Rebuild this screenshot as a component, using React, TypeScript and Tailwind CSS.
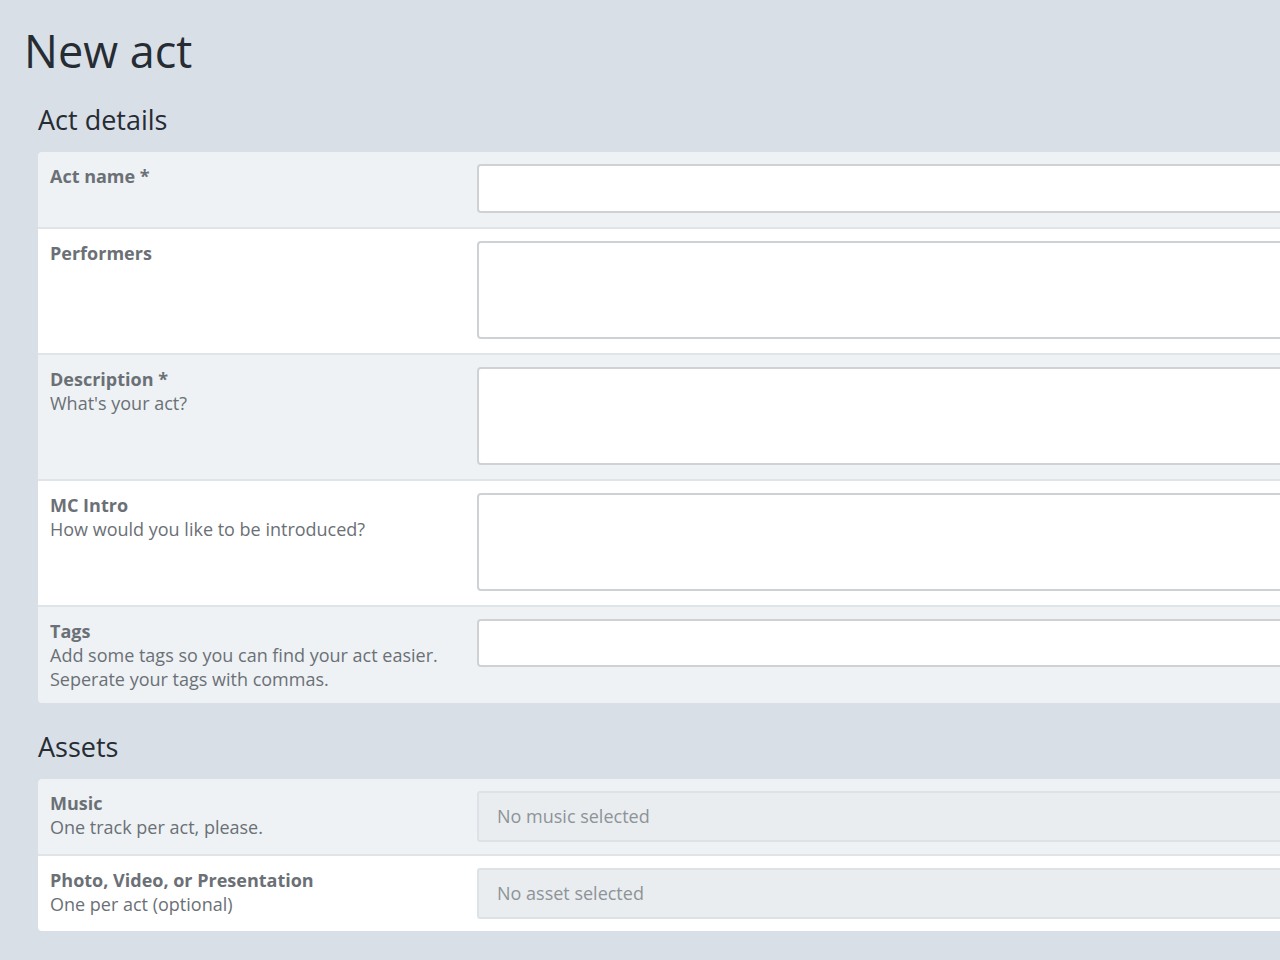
import React from 'react';

type Field = {
  label: string;
  hint?: string[];
  kind: 'input' | 'textarea' | 'tags' | 'asset';
  placeholder?: string;
};

const DETAILS: Field[] = [
  { label: 'Act name *', kind: 'input' },
  { label: 'Performers', kind: 'textarea' },
  { label: 'Description *', hint: ["What's your act?"], kind: 'textarea' },
  { label: 'MC Intro', hint: ['How would you like to be introduced?'], kind: 'textarea' },
  {
    label: 'Tags',
    hint: ['Add some tags so you can find your act easier.', 'Seperate your tags with commas.'],
    kind: 'tags',
  },
];

const ASSETS: Field[] = [
  { label: 'Music', hint: ['One track per act, please.'], kind: 'asset', placeholder: 'No music selected' },
  {
    label: 'Photo, Video, or Presentation',
    hint: ['One per act (optional)'],
    kind: 'asset',
    placeholder: 'No asset selected',
  },
];

function Control({ field }: { field: Field }) {
  if (field.kind === 'asset') {
    return (
      <div className="h-[51px] rounded-[3px] border-2 border-[#dde2e6] bg-[#e9edf0] px-[18px] flex items-center text-[18px] text-[#8e9398]">
        {field.placeholder}
      </div>
    );
  }
  if (field.kind === 'textarea') {
    return <div className="h-[98px] mb-[2px] rounded-[4px] border-2 border-[#cfd2d5] bg-white" />;
  }
  if (field.kind === 'tags') {
    return <div className="h-[48px] rounded-[4px] border-2 border-[#cfd2d5] bg-white" />;
  }
  return <div className="h-[49px] mb-[2px] rounded-[4px] border-2 border-[#cfd2d5] bg-white" />;
}

function Section({ title, fields }: { title: string; fields: Field[] }) {
  return (
    <section className="pl-[14px]">
      <h2 className="text-[27px] leading-[40px] text-[#262c34] mb-[12px]">{title}</h2>
      <div className="w-[1400px] rounded-[4px] overflow-hidden">
        {fields.map((f, i) => (
          <div
            key={f.label}
            className={`flex ${i < fields.length - 1 ? 'border-b-2 border-[#dfe4e9]' : ''} ${
              i % 2 === 0 ? 'bg-[#eef2f5]' : 'bg-white'
            }`}
          >
            <div className="w-[439px] shrink-0 px-3 py-3 text-[18px] leading-[24px]">
              <div className="font-bold text-[#6b7076]">{f.label}</div>
              {f.hint?.map((h) => (
                <div key={h} className="text-[#6b7076]">
                  {h}
                </div>
              ))}
            </div>
            <div className="flex-1 py-[12px]">
              <Control field={f} />
            </div>
          </div>
        ))}
      </div>
    </section>
  );
}

export default function App() {
  return (
    <div
      className="min-h-screen w-full overflow-hidden bg-[#d9dfe6]"
      style={{ fontFamily: '"Open Sans", "Noto Sans", Arial, sans-serif' }}
    >
      <div className="pl-6 pt-[21px] pb-10">
        <h1 className="text-[45px] leading-[60px] text-[#262c34] mb-[19px]">New act</h1>
        <Section title="Act details" fields={DETAILS} />
        <div className="h-[24px]" />
        <Section title="Assets" fields={ASSETS} />
      </div>
    </div>
  );
}
